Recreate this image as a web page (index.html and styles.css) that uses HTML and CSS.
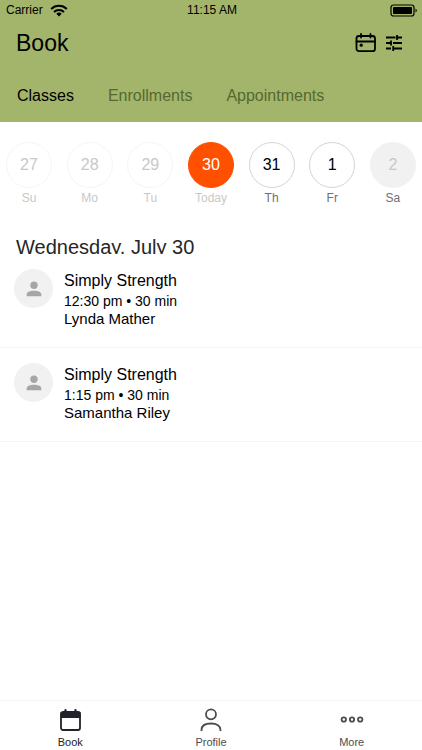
FILE: index.html
```html
<!DOCTYPE html>
<html lang="en">
<head>
    <meta charset="UTF-8">
    <meta name="viewport" content="width=device-width, initial-scale=1.0">
    <title>Book</title>
    <link rel="stylesheet" href="styles.css">
</head>
<body>

<header class="header">
    <div class="status-bar">
        <div class="carrier">
            <span>Carrier</span>
            <svg width="18" height="13" viewBox="0 0 18 13" fill="none" stroke="#000" stroke-width="2">
                <path d="M1.2 5a11.2 11.2 0 0 1 15.6 0"/>
                <path d="M4 8a7.2 7.2 0 0 1 10 0"/>
                <path d="M9 12.4L6.3 9.8a3.9 3.9 0 0 1 5.4 0z" fill="#000" stroke="none"/>
            </svg>
        </div>
        <span>11:15 AM</span>
        <div class="battery">
            <svg width="28" height="13" viewBox="0 0 28 13">
                <rect x="1" y="1" width="23" height="11" rx="2.5" fill="none" stroke="#000" stroke-width="1.2"/>
                <rect x="3" y="3" width="19" height="7" rx="0.8" fill="#000"/>
                <path d="M25.5 4.5q2.6 2 0 4z" fill="#000"/>
            </svg>
        </div>
    </div>

    <div class="title-bar">
        <h1>Book</h1>
        <div class="actions">
            <button class="icon-button" aria-label="Calendar">
                <svg width="22" height="20" viewBox="0 0 22 20" fill="none" stroke="#000" stroke-width="1.8" stroke-linecap="round">
                    <rect x="1.5" y="3" width="18.5" height="15.2" rx="2.5"/>
                    <path d="M1.5 8.5H20M6 1v3.6M15.5 1v3.6"/>
                    <circle cx="6.2" cy="12.2" r="1.6" fill="#000" stroke="none"/>
                </svg>
            </button>
            <button class="icon-button" aria-label="Filters">
                <svg width="18" height="20" viewBox="0 0 18 20" fill="none" stroke="#000" stroke-width="1.8">
                    <path d="M1 4.5h9.5M12 2v5M12 4.5h5M1 10h5M6 7.5v5M8 10h9M1 15.5h5M8.2 13v5M8.2 15.5H17"/>
                </svg>
            </button>
        </div>
    </div>

    <nav class="tabs">
        <a href="#classes" class="active">Classes</a>
        <a href="#enrollments">Enrollments</a>
        <a href="#appointments">Appointments</a>
    </nav>
</header>

<main>
    <div class="days">
        <button class="day past"><span class="number">27</span><span>Su</span></button>
        <button class="day past"><span class="number">28</span><span>Mo</span></button>
        <button class="day past"><span class="number">29</span><span>Tu</span></button>
        <button class="day today"><span class="number">30</span><span>Today</span></button>
        <button class="day"><span class="number">31</span><span>Th</span></button>
        <button class="day"><span class="number">1</span><span>Fr</span></button>
        <button class="day closed"><span class="number">2</span><span>Sa</span></button>
    </div>

    <h2>Wednesday, July 30</h2>

    <ul class="classes">
        <li class="class">
            <div class="avatar">
                <svg width="16" height="16" viewBox="0 0 16 16" fill="#a6a6a6">
                    <circle cx="8" cy="4.2" r="3.7"/>
                    <path d="M.7 15.2v-2C.7 10.8 4.5 9.7 8 9.7s7.3 1.1 7.3 3.5v2z"/>
                </svg>
            </div>
            <div class="details">
                <h3>Simply Strength</h3>
                <p class="time">12:30 pm • 30 min</p>
                <p class="teacher">Lynda Mather</p>
            </div>
        </li>
        <li class="class">
            <div class="avatar">
                <svg width="16" height="16" viewBox="0 0 16 16" fill="#a6a6a6">
                    <circle cx="8" cy="4.2" r="3.7"/>
                    <path d="M.7 15.2v-2C.7 10.8 4.5 9.7 8 9.7s7.3 1.1 7.3 3.5v2z"/>
                </svg>
            </div>
            <div class="details">
                <h3>Simply Strength</h3>
                <p class="time">1:15 pm • 30 min</p>
                <p class="teacher">Samantha Riley</p>
            </div>
        </li>
    </ul>
</main>

<nav class="bottom-nav">
    <a href="#book" class="active">
        <svg width="24" height="26" viewBox="0 0 24 26">
            <rect x="3" y="5" width="19" height="18" rx="2" fill="none" stroke="#22222a" stroke-width="1.8"/>
            <path d="M2.5 5h20v6h-20z" fill="#22222a"/>
            <path d="M7.5 3v3M17.5 3v3" stroke="#22222a" stroke-width="2.2" stroke-linecap="round"/>
        </svg>
        <span>Book</span>
    </a>
    <a href="#profile">
        <svg width="24" height="26" viewBox="0 0 24 26" fill="none" stroke="#4c4c52" stroke-width="1.8">
            <circle cx="12" cy="7.3" r="5"/>
            <path d="M2.5 24v-1c0-4 3.5-6.500 9.500-6.500s9.500 2.500 9.500 6.500v1"/>
        </svg>
        <span>Profile</span>
    </a>
    <a href="#more">
        <svg width="24" height="26" viewBox="0 0 24 26" fill="none" stroke="#4c4c52" stroke-width="1.8">
            <circle cx="3.8" cy="12.500" r="2.200"/>
            <circle cx="12" cy="12.500" r="2.200"/>
            <circle cx="20.2" cy="12.500" r="2.200"/>
        </svg>
        <span>More</span>
    </a>
</nav>

</body>
</html>
```
FILE: styles.css
```css
* {
    box-sizing: border-box;
}
body {
    font-family: "Liberation Sans", Arial, sans-serif;
    background-color: #fff;
    color: #000;
    margin: 0;
    min-height: 100vh;
    display: flex;
    flex-direction: column;
}
h1, h2, h3, p, ul {
    margin: 0;
    padding: 0;
    font-weight: normal;
}
a {
    color: inherit;
    text-decoration: none;
}
button {
    background: none;
    border: none;
    padding: 0;
    font-family: inherit;
    color: inherit;
    cursor: pointer;
}
svg {
    display: block;
}
.header {
    background-color: #a3b56b;
}
.status-bar {
    display: grid;
    grid-template-columns: 1fr auto 1fr;
    align-items: center;
    height: 20px;
    padding: 0 4px 0 6px;
    font-size: 12px;
}
.carrier {
    display: flex;
    align-items: center;
    gap: 7px;
}
.battery {
    justify-self: end;
}
.title-bar {
    display: flex;
    justify-content: space-between;
    align-items: center;
    height: 46px;
    padding: 0 19px 0 16px;
}
h1 {
    font-size: 23px;
}
.actions {
    display: flex;
    gap: 8px;
}
.tabs {
    display: flex;
    gap: 34px;
    padding: 20px 17px 16px;
    font-size: 16px;
    line-height: 20px;
    color: #55692f;
}
.tabs .active {
    color: #000;
}
main {
    flex: 1;
}
.days {
    display: flex;
    justify-content: space-between;
    padding: 20px 6px 29px;
}
.day {
    display: flex;
    flex-direction: column;
    align-items: center;
    gap: 2px;
    width: 46px;
    font-size: 12px;
    line-height: 16px;
    color: #707070;
}
.number {
    display: flex;
    justify-content: center;
    align-items: center;
    width: 46px;
    height: 46px;
    border: 1px solid #d4d4d4;
    border-radius: 50%;
    font-size: 16px;
    color: #000;
}
.past, .today {
    color: #c8c8c8;
}
.past .number {
    border-color: #f5f5f5;
    color: #c8c8c8;
}
.today .number {
    background-color: #ff5000;
    border-color: #ff5000;
    color: #fff;
}
.closed .number {
    background-color: #f1f1f1;
    border-color: #f1f1f1;
    color: #c8c8c8;
}
/* the date line is cut off just under the baseline */
h2 {
    height: 19px;
    margin: 0 16px;
    overflow: hidden;
    font-size: 20px;
    line-height: 24px;
    color: #262626;
}
.classes {
    list-style: none;
}
.class {
    display: flex;
    gap: 11px;
    padding: 15px 14px 19px;
    border-bottom: 1px solid #f3f3f3;
}
.avatar {
    display: flex;
    justify-content: center;
    align-items: center;
    width: 39px;
    height: 39px;
    border-radius: 50%;
    background-color: #f1f1f1;
}
.details {
    padding-top: 1px;
}
h3 {
    font-size: 16px;
    line-height: 22px;
}
.time {
    font-size: 14px;
    line-height: 18px;
}
.teacher {
    font-size: 15px;
    line-height: 18px;
}
.bottom-nav {
    display: grid;
    grid-template-columns: repeat(3, 1fr);
    padding: 6px 0 2px;
    border-top: 1px solid #f3f3f3;
    font-size: 11px;
    line-height: 12px;
    color: #4c4c52;
}
.bottom-nav a {
    display: flex;
    flex-direction: column;
    align-items: center;
    gap: 3px;
}
.bottom-nav .active {
    color: #22222a;
}
```
